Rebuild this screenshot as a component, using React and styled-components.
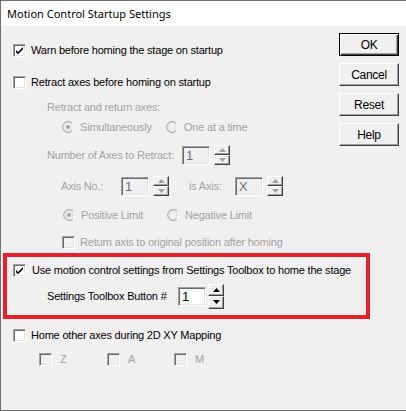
import React from 'react';
import styled, { createGlobalStyle, css } from 'styled-components';

const GlobalStyle = createGlobalStyle`
    html, body {
        margin: 0;
        padding: 0;
        background: #f0f0f0;
    }
    * {
        box-sizing: border-box;
    }
`;

const DISABLED = '#a3a3a3';

const Window = styled.div`
    width: 406px;
    height: 411px;
    display: flex;
    flex-direction: column;
    background: #f0f0f0;
    border: 1px solid #6e6e6e;
    border-right: none;
    font-family: 'Liberation Sans', Arial, sans-serif;
    font-size: 11px;
    letter-spacing: -0.2px;
    color: #000;
    overflow: hidden;
`;

const TitleBar = styled.div`
    height: 25px;
    flex: none;
    background: #fff;
    display: flex;
    align-items: center;
    padding-left: 6px;
    font-family: 'Noto Sans', 'Open Sans', sans-serif;
    font-size: 11px;
    letter-spacing: 0;
    color: #000;
`;

const Body = styled.div`
    flex: 1;
    display: flex;
`;

const Content = styled.div`
    width: 336px;
    display: flex;
    flex-direction: column;
    padding-left: 2px;
`;

const Row = styled.div`
    height: ${({ h }) => h || 20}px;
    margin-top: ${({ gap }) => gap || 0}px;
    padding-left: ${({ indent }) => indent || 0}px;
    display: flex;
    align-items: center;
    color: ${({ disabled }) => (disabled ? DISABLED : '#000')};
    white-space: nowrap;
`;

const Label = styled.span`
    display: inline-block;
    width: ${({ w }) => (w ? `${w}px` : 'auto')};
    padding-left: ${({ pad }) => pad || 0}px;
    flex: none;
`;

const Highlight = styled.div`
    margin-top: 1px;
    width: 367px;
    border: 4px solid #e8202a;
    padding: 3px 0 9px 6px;
    display: flex;
    flex-direction: column;
`;

const sunken = css`
    border-top: 1px solid #a0a0a0;
    border-left: 1px solid #a0a0a0;
    border-bottom: 1px solid #fff;
    border-right: 1px solid #fff;
    box-shadow: inset 1px 1px #696969, inset -1px -1px #e3e3e3;
`;

const Box = styled.span`
    width: 13px;
    height: 13px;
    flex: none;
    ${sunken};
    background: ${({ disabled }) => (disabled ? '#f0f0f0' : '#fff')};
    display: inline-flex;
    align-items: center;
    justify-content: center;
    margin-right: ${({ space }) => space || 5}px;
`;

const Option = styled.span`
    display: inline-flex;
    align-items: center;
    width: ${({ w }) => (w ? `${w}px` : 'auto')};
    flex: none;
`;

const RadioDot = styled.svg`
    flex: none;
    margin-right: 6px;
`;

const Field = styled.span`
    width: ${({ w }) => w || 28}px;
    height: ${({ h }) => h || 19}px;
    flex: none;
    ${sunken};
    background: ${({ disabled }) => (disabled ? '#f0f0f0' : '#fff')};
    color: ${({ disabled }) => (disabled ? '#6d6d6d' : '#000')};
    font-size: 13px;
    letter-spacing: 0;
    display: inline-flex;
    align-items: center;
    padding-left: 3px;
`;

const Spin = styled.span`
    display: inline-flex;
    flex-direction: column;
    width: 16px;
    height: ${({ h }) => h || 20}px;
    margin-left: ${({ gap }) => gap || 4}px;
    flex: none;
`;

const SpinHalf = styled.span`
    flex: 1;
    background: #f0f0f0;
    border-top: 1px solid #fff;
    border-left: 1px solid #fff;
    border-bottom: 1px solid #404040;
    border-right: 1px solid #404040;
    box-shadow: inset -1px -1px #a0a0a0;
    display: flex;
    align-items: center;
    justify-content: center;
`;

const Buttons = styled.div`
    display: flex;
    flex-direction: column;
    gap: 7px;
    padding-top: 7px;
    padding-left: 2px;
`;

const Button = styled.div`
    width: 60px;
    height: 23px;
    background: #f0f0f0;
    display: flex;
    align-items: center;
    justify-content: center;
    font-size: 12px;
    letter-spacing: -0.3px;
    border-top: 1px solid #fff;
    border-left: 1px solid #fff;
    border-bottom: 1px solid #404040;
    border-right: 1px solid #404040;
    box-shadow: inset -1px -1px #a0a0a0;
    ${({ primary }) =>
        primary &&
        css`
            border: 1px solid #000;
            box-shadow: inset 1px 1px #fff, inset -1px -1px #404040, inset -2px -2px #a0a0a0;
        `}
`;

function Check({ checked, disabled, space }) {
    return (
        <Box disabled={disabled} space={space}>
            {checked && (
                <svg width="9" height="9" viewBox="0 0 9 9">
                    <path d="M1 4 L3 6 L8 1 L8 3.2 L3 8.2 L1 6.2 Z" fill="#000" />
                </svg>
            )}
        </Box>
    );
}

function Radio({ checked }) {
    return (
        <RadioDot width="12" height="12" viewBox="0 0 12 12">
            <path d="M10 2 A5.5 5.5 0 1 0 10 10" fill="none" stroke="#a0a0a0" strokeWidth="1" />
            <path d="M10 2 A5.5 5.5 0 0 1 10 10" fill="none" stroke="#fff" strokeWidth="1" />
            <circle cx="6" cy="6" r="4.2" fill="#f0f0f0" stroke="#d6d6d6" strokeWidth="0.8" />
            {checked && <circle cx="6" cy="6" r="2" fill="#a0a0a0" />}
        </RadioDot>
    );
}

function Arrow({ up, color }) {
    return (
        <svg width="7" height="4" viewBox="0 0 7 4">
            <path d={up ? 'M3.5 0 L7 4 L0 4 Z' : 'M0 0 L7 0 L3.5 4 Z'} fill={color} />
        </svg>
    );
}

function Spinner({ value, disabled, fieldW, fieldH, spinH, gap }) {
    const color = disabled ? '#a0a0a0' : '#000';
    return (
        <>
            <Field w={fieldW} h={fieldH} disabled={disabled}>
                {value}
            </Field>
            <Spin h={spinH} gap={gap}>
                <SpinHalf>
                    <Arrow up color={color} />
                </SpinHalf>
                <SpinHalf>
                    <Arrow color={color} />
                </SpinHalf>
            </Spin>
        </>
    );
}

export default function App() {
    return (
        <>
            <GlobalStyle />
            <Window>
                <TitleBar>Motion Control Startup Settings</TitleBar>
                <Body>
                    <Content>
                        <Row gap={14} indent={10}>
                            <Check checked />
                            Warn before homing the stage on startup
                        </Row>
                        <Row gap={12} indent={10}>
                            <Check />
                            Retract axes before homing on startup
                        </Row>
                        <Row gap={5} indent={44} disabled>
                            Retract and return axes:
                        </Row>
                        <Row indent={59} disabled>
                            <Option w={104}>
                                <Radio checked />
                                Simultaneously
                            </Option>
                            <Option>
                                <Radio />
                                One at a time
                            </Option>
                        </Row>
                        <Row gap={8} indent={44} disabled>
                            <Label w={135}>Number of Axes to Retract:</Label>
                            <Spinner value="1" disabled />
                        </Row>
                        <Row gap={11} indent={58} disabled>
                            <Label w={60}>Axis No.:</Label>
                            <Spinner value="1" disabled />
                            <Label w={66} pad={20}>is Axis:</Label>
                            <Spinner value="X" disabled />
                        </Row>
                        <Row gap={9} indent={60} disabled>
                            <Option w={104}>
                                <Radio checked />
                                Positive Limit
                            </Option>
                            <Option>
                                <Radio />
                                Negative Limit
                            </Option>
                        </Row>
                        <Row gap={7} indent={59} disabled>
                            <Check disabled />
                            Return axis to original position after homing
                        </Row>
                        <Highlight>
                            <Row>
                                <Check checked space={6} />
                                Use motion control settings from Settings Toolbox to home the stage
                            </Row>
                            <Row gap={6} indent={34}>
                                <Label w={131}>Settings Toolbox Button #</Label>
                                <Spinner value="1" fieldW={28} fieldH={19} spinH={25} gap={2} />
                            </Row>
                        </Highlight>
                        <Row gap={6} indent={10}>
                            <Check />
                            Home other axes during 2D XY Mapping
                        </Row>
                        <Row gap={4} indent={36} disabled>
                            <Option w={68}>
                                <Check disabled space={8} />Z
                            </Option>
                            <Option w={67}>
                                <Check disabled space={8} />A
                            </Option>
                            <Option>
                                <Check disabled space={8} />M
                            </Option>
                        </Row>
                    </Content>
                    <Buttons>
                        <Button primary>OK</Button>
                        <Button>Cancel</Button>
                        <Button>Reset</Button>
                        <Button>Help</Button>
                    </Buttons>
                </Body>
            </Window>
        </>
    );
}
